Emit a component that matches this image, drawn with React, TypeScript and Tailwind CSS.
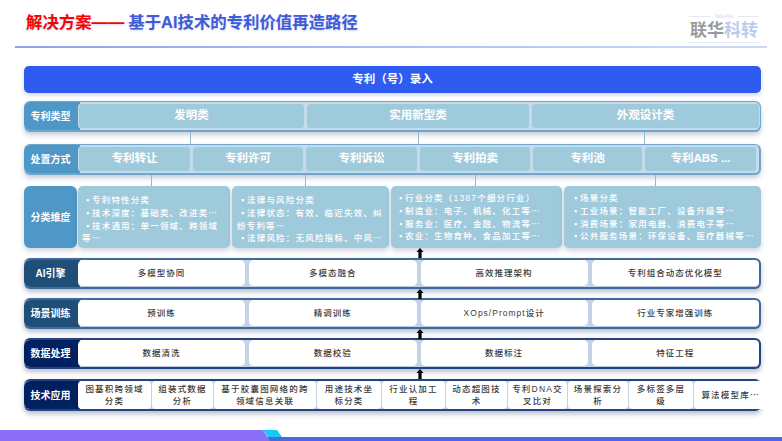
const sans = "font-['Liberation_Sans','Noto_Sans_CJK_SC',sans-serif]";

const blueRows = [
  {
    label: "专利类型",
    cells: [
      { text: "发明类", w: "w-[227px]" },
      { text: "实用新型类", w: "w-[224px]" },
      { text: "外观设计类", w: "w-[229px]" },
    ],
  },
  {
    label: "处置方式",
    cells: [
      { text: "专利转让", w: "w-[113px]" },
      { text: "专利许可", w: "w-[112px]" },
      { text: "专利诉讼", w: "w-[113px]" },
      { text: "专利拍卖", w: "w-[112px]" },
      { text: "专利池", w: "w-[111px]" },
      { text: "专利ABS ...", w: "w-[113px]" },
    ],
  },
];

const classify = [
  {
    w: "w-[152px]",
    pad: "pl-[4px] pt-[8px]",
    lines: ["专利特性分类", "技术深度：基础类、改进类⋯", "技术通用：单一领域、跨领域等⋯"],
  },
  {
    w: "w-[157px]",
    pad: "pl-[5px] pt-[8px]",
    lines: ["法律与风险分类", "法律状态：有效、临近失效、纠纷专利等⋯", "法律风险：无风险指标、中风⋯"],
  },
  {
    w: "w-[171px]",
    pad: "pl-[4px] pt-[6px]",
    lines: ["行业分类（1387个细分行业）", "制造业：电子、机械、化工等⋯", "服务业：医疗、金融、物流等⋯", "农业：生物育种、食品加工等⋯"],
  },
  {
    w: "w-[197px]",
    pad: "pl-[6px] pt-[6px]",
    lines: ["场景分类", "工业场景：智能工厂、设备升级等⋯", "消费场景：家用电器、消费电子等⋯", "公共服务场景：环保设备、医疗器械等⋯"],
  },
];

const whiteRows = [
  { label: "AI引擎", color: "bg-[#1f4e79]", border: "border-[#3f6a9a]", items: ["多模型协同", "多模态融合", "高效推理架构", "专利组合动态优化模型"] },
  { label: "场景训练", color: "bg-[#1f4e79]", border: "border-[#3f6a9a]", items: ["预训练", "精调训练", "XOps/Prompt设计", "行业专家增强训练"] },
  { label: "数据处理", color: "bg-[#002060]", border: "border-[#24437f]", items: ["数据清洗", "数据校验", "数据标注", "特征工程"] },
];

const techCells = [
  { text: "图基积跨领域分类", w: "w-[73px] px-[5px]" },
  { text: "组装式数据分析", w: "w-[61px] px-[5px]" },
  { text: "基于胶囊图网络的跨领域信息关联", w: "w-[102px] px-[5px]" },
  { text: "用途技术坐标分类", w: "w-[64px] px-[5px]" },
  { text: "行业认加工程", w: "w-[63px] px-[5px]" },
  { text: "动态超图技术", w: "w-[61px] px-[5px]" },
  { text: "专利DNA交叉比对", w: "w-[59px] px-[3px]" },
  { text: "场景探索分析", w: "w-[60px] px-[5px]" },
  { text: "多标签多层级", w: "w-[64px] px-[5px]" },
  { text: "算法模型库⋯", w: "w-[73px] px-[5px]" },
];

// small black arrow between the lower rows
const UpArrow = ({ h = "h-[10px]" }: { h?: string }) => (
  <div className={`${h} pl-[392px] flex items-start`}>
    <svg width="8" height="10" viewBox="0 0 8 10" className="shrink-0">
      <path d="M4 0 L7.5 4 L5.6 4 L5.6 10 L2.4 10 L2.4 4 L0.5 4 Z" fill="#000" />
    </svg>
  </div>
);

const RowLabel = ({ text, color }: { text: string; color: string }) => (
  <div className={`w-[56px] shrink-0 flex items-center justify-center rounded-l-[6px] text-white font-bold text-[10px] pr-[3px] ${color}`}>
    {text}
  </div>
);

const BlueRow = ({ row, h }: { row: (typeof blueRows)[number]; h: string }) => (
  <div className={`flex ${h} rounded-[6px] border-r-2 border-b-2 border-t border-[#6fa6cb] bg-[#c9dbe8] shadow-[0_3px_5px_rgba(70,90,130,0.3)]`}>
    <RowLabel text={row.label} color="bg-[#4f97c6]" />
    <div className="-ml-[2px] flex flex-1 gap-[1px] py-[1px]">
      {row.cells.map((c) => (
        <div
          key={c.text}
          className={`${c.w} flex items-center justify-center rounded-[4px] bg-[#9fcadc] border border-[#c3dce8] text-white font-bold text-[11.5px]`}
        >
          {c.text}
        </div>
      ))}
    </div>
  </div>
);

const WhiteRow = ({ row }: { row: (typeof whiteRows)[number] }) => (
  <div className={`flex h-[31px] rounded-[6px] border-r-2 border-b-2 border-t-2 ${row.border} bg-[#c5d3e8] shadow-[0_3px_5px_rgba(50,70,110,0.35)]`}>
    <RowLabel text={row.label} color={row.color} />
    <div className="-ml-[2px] grid flex-1 grid-cols-4 gap-[4px]">
      {row.items.map((t) => (
        <div
          key={t}
          className="flex items-center justify-center rounded-[5px] bg-white text-[#3a3a3a] font-medium text-[8.5px] tracking-[1px] border-b border-[#b9c8e0]"
        >
          {t}
        </div>
      ))}
    </div>
  </div>
);

export default function App() {
  return (
    <div className={`${sans} relative w-[782px] h-[441px] overflow-hidden bg-white`}>
      {/* header */}
      <div className="h-[46px] mx-[15px] flex">
        <div className="pl-[11px] pt-[10px] font-bold text-[16.4px] leading-[24px] flex [text-shadow:0_1px_2px_rgba(60,80,180,0.25)]">
          <span className="text-[#fe0000]">解决方案——</span>
          <span className="ml-[4px] text-[#3f5bd8]">基于AI技术的专利价值再造路径</span>
        </div>
        <div className="ml-auto mr-[8px] mt-[12px] w-[70px] h-[31px] flex flex-col items-center border-b border-[#e6ecf8]">
          <div className="w-full flex items-center gap-[3px] text-[6px] leading-[8px] text-[#d0daf0]">
            <div className="flex-1 h-px bg-[#e4e9f5]" />
            TaloAlo
            <div className="flex-1 h-px bg-[#e4e9f5]" />
          </div>
          <div className="font-bold text-[17px] leading-[22px] whitespace-nowrap">
            <span className="text-[#9a9a9a]">联华</span>
            <span className="text-[#bccbea]">科转</span>
          </div>
        </div>
      </div>
      <div className="h-[2px] mx-[15px] bg-gradient-to-r from-[#8ea2ee] to-[#cfd9f6]" />

      <div className="ml-[24px] w-[737px] pt-[18px]">
        <div className="h-[27px] rounded-[5px] bg-[#2f5cf0] flex items-center justify-center text-white font-bold text-[11.5px] shadow-[0_2px_4px_rgba(60,80,130,0.25)]">
          专利（号）录入
        </div>

        <div className="mt-[8px]">
          <BlueRow row={blueRows[0]} h="h-[31px]" />
        </div>
        <div className="h-[12px] flex">
          <div className="ml-[166px] w-px bg-[#8fbdd2]" />
          <div className="ml-[227px] w-px bg-[#8fbdd2]" />
          <div className="ml-[225px] w-px bg-[#8fbdd2]" />
        </div>
        <BlueRow row={blueRows[1]} h="h-[31px]" />
        <div className="h-[11px] flex">
          <div className="ml-[127px] w-px bg-[#8fbdd2]" />
          <div className="ml-[153px] w-px bg-[#8fbdd2]" />
          <div className="ml-[169px] w-px bg-[#8fbdd2]" />
          <div className="ml-[179px] w-px bg-[#8fbdd2]" />
        </div>

        {/* 分类维度 */}
        <div className="flex h-[62px]">
          <div className="w-[53px] shrink-0 rounded-[6px] bg-[#4f97c6] flex items-center justify-center text-white font-bold text-[10px] shadow-[0_3px_5px_rgba(70,90,130,0.25)]">
            分类维度
          </div>
          <div className="flex flex-1 gap-[2px] ml-[1px]">
            {classify.map((c) => (
              <div
                key={c.lines[0]}
                className={`${c.w} ${c.pad} shrink-0 rounded-[5px] bg-[#9fcadc] pr-[1px] text-white font-medium text-[8.5px] leading-[12.8px] tracking-[1.2px] shadow-[0_3px_5px_rgba(70,90,130,0.25)] overflow-hidden`}
              >
                {c.lines.map((l) => (
                  <div key={l} className="indent-[4px]">
                    <span className="inline-block w-[6px] indent-0">▪</span>
                    {l}
                  </div>
                ))}
              </div>
            ))}
          </div>
        </div>

        <UpArrow />
        <WhiteRow row={whiteRows[0]} />
        <UpArrow h="h-[9px]" />
        <WhiteRow row={whiteRows[1]} />
        <UpArrow h="h-[9px]" />
        <WhiteRow row={whiteRows[2]} />
        <UpArrow />

        {/* 技术应用 */}
        <div className="flex h-[32px] rounded-[6px] border-r-2 border-b-2 border-t-2 border-[#24437f] bg-[#c5d3e8] shadow-[0_3px_5px_rgba(50,70,110,0.35)]">
          <RowLabel text="技术应用" color="bg-[#002060]" />
          <div className="-ml-[2px] flex flex-1 gap-[1px]">
            {techCells.map((c) => (
              <div
                key={c.text}
                className={`${c.w} shrink-0 flex items-center justify-center text-center rounded-[4px] bg-white text-[#3a3a3a] font-medium text-[8.5px] leading-[12px] tracking-[1.2px]`}
              >
                {c.text}
              </div>
            ))}
          </div>
        </div>
      </div>

      {/* footer stripe */}
      <div className="absolute left-0 right-0 bottom-0 h-[11px] overflow-hidden">
        <div className="absolute left-0 right-0 bottom-0 h-[4px] bg-[#4a69e2]" />
        <svg className="absolute left-0 top-0" width="290" height="11" viewBox="0 0 290 11">
          <path d="M0 0 H277 L282 7 H268 L263 0 Z" fill="#18c8f5" />
          <path d="M0 0 H263 L270 11 H0 Z" fill="#8a6ef5" />
        </svg>
      </div>
    </div>
  );
}
